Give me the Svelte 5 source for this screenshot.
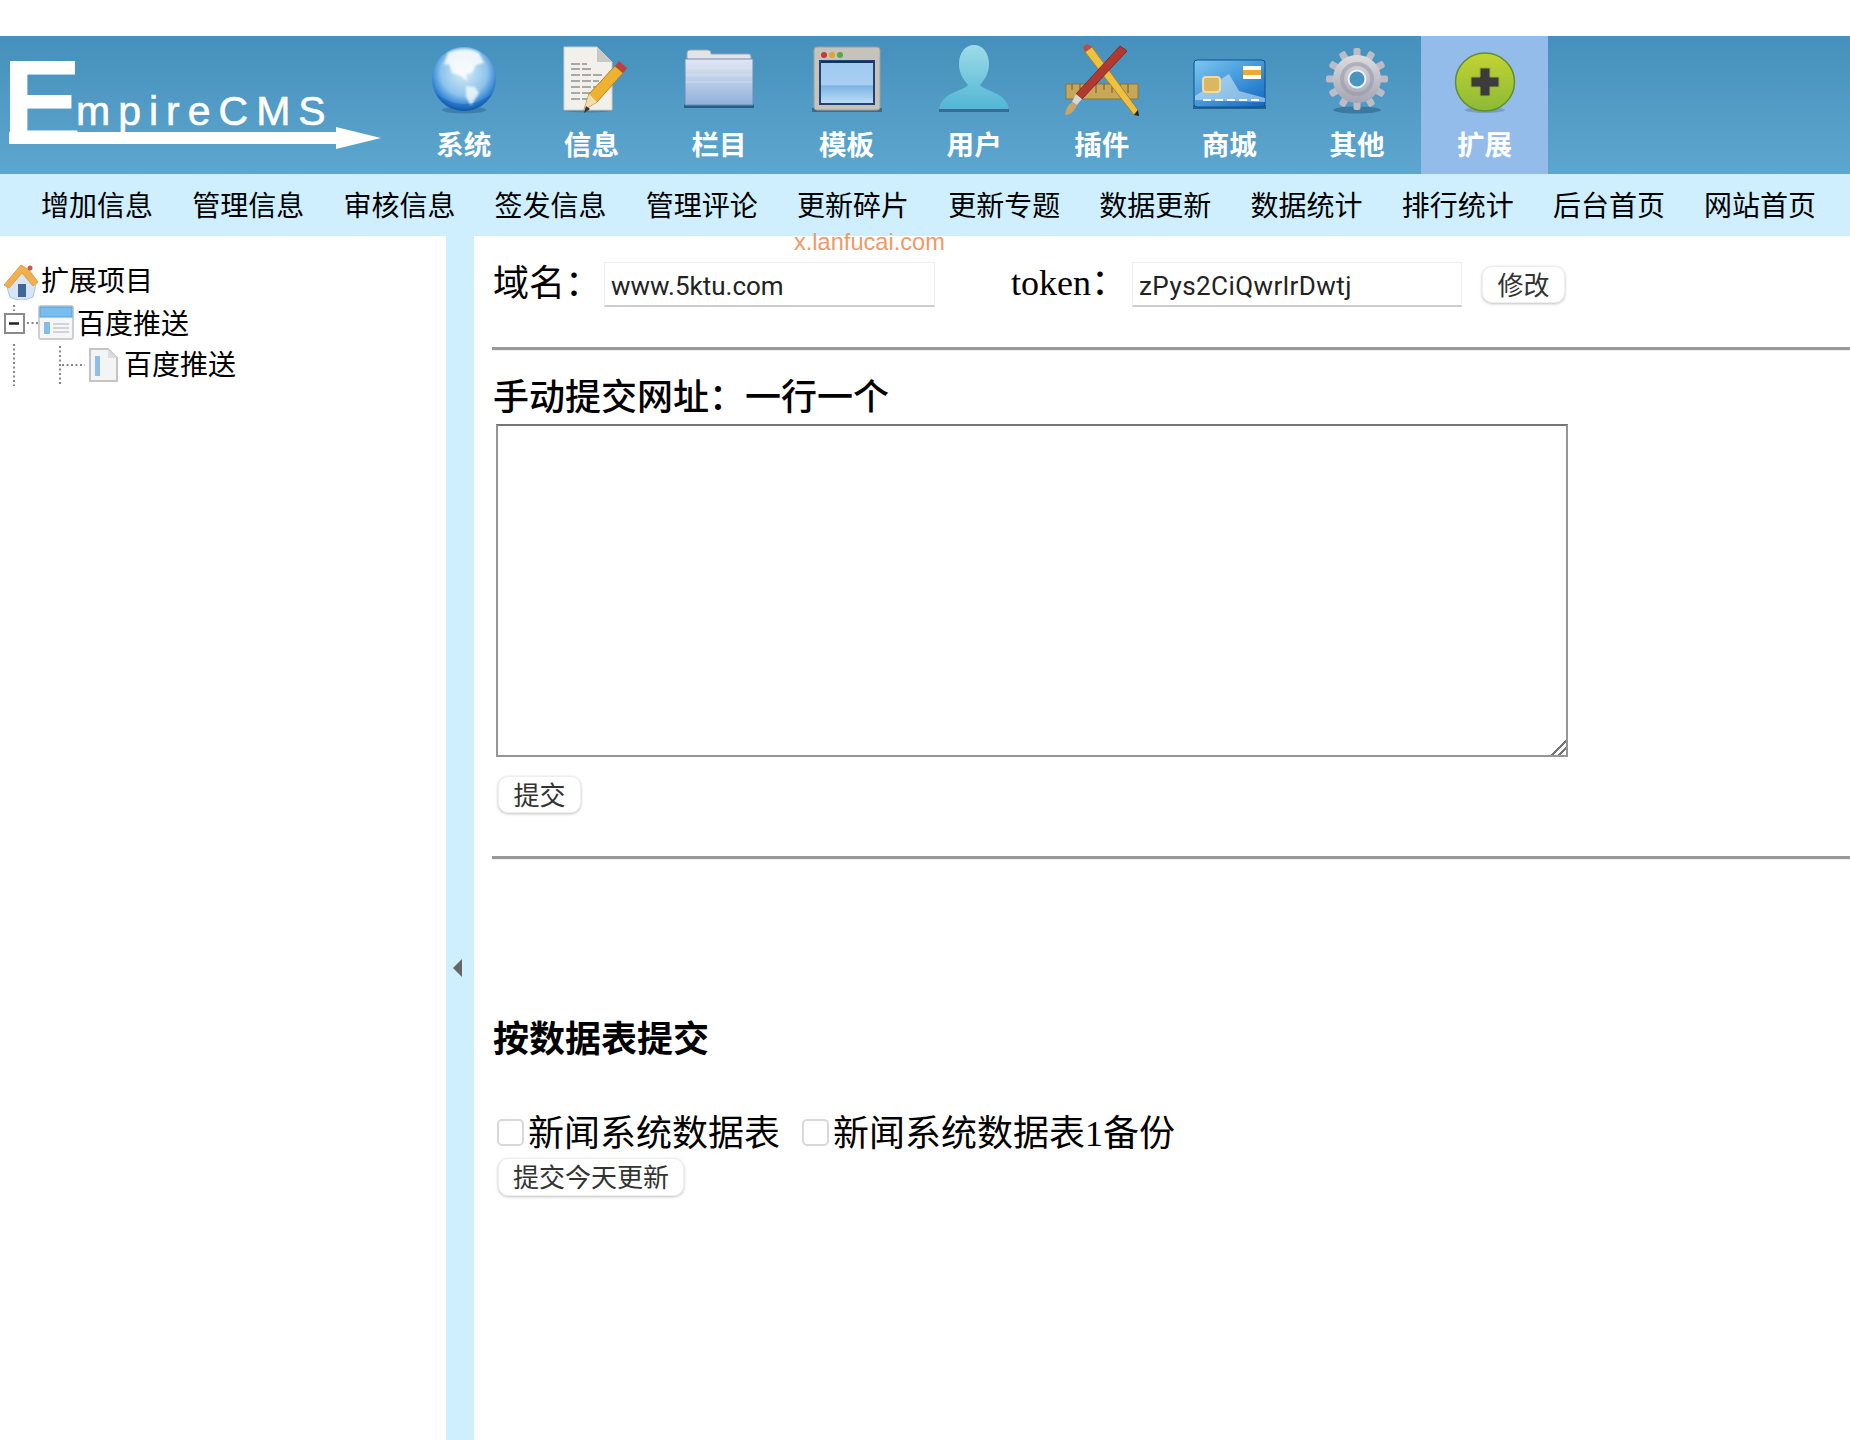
<script>
  const navItems = [
    { label: '系统', icon: 'globe' },
    { label: '信息', icon: 'doc' },
    { label: '栏目', icon: 'folder' },
    { label: '模板', icon: 'window' },
    { label: '用户', icon: 'user' },
    { label: '插件', icon: 'tools' },
    { label: '商城', icon: 'card' },
    { label: '其他', icon: 'gear' },
    { label: '扩展', icon: 'plus', active: true }
  ];
  const subItems = ['增加信息', '管理信息', '审核信息', '签发信息', '管理评论', '更新碎片', '更新专题', '数据更新', '数据统计', '排行统计', '后台首页', '网站首页'];
  const gearTeeth = [0, 30, 60, 90, 120, 150, 180, 210, 240, 270, 300, 330];
</script>

<div class="page">
  <header class="top">
    <div class="logo">
      <svg width="400" height="138" viewBox="0 0 400 138">
        <text class="logo-e" x="2" y="108">E</text>
        <text class="logo-word" x="76" y="89">mpireCMS</text>
        <path d="M9 96H336V91L381 102 336 113V108H9Z" fill="#fff" />
      </svg>
    </div>
    <nav class="nav">
      {#each navItems as item}
        <div class="nav-item" class:active={item.active}>
          <svg class="nav-icon" width="80" height="72" viewBox="0 0 80 72">
            {#if item.icon === 'globe'}
              <defs>
                <radialGradient id="globeFill" cx="0.5" cy="0.4" r="0.6">
                  <stop offset="0" stop-color="#d8ecf8" />
                  <stop offset="0.6" stop-color="#8cc4ec" />
                  <stop offset="0.88" stop-color="#2c7ed0" />
                  <stop offset="1" stop-color="#0f55ac" />
                </radialGradient>
                <filter id="landBlur"><feGaussianBlur stdDeviation="1.2" /></filter>
              </defs>
              <ellipse cx="40" cy="66" rx="22" ry="3.5" fill="#2f6c92" opacity="0.6" />
              <circle cx="40" cy="35" r="32" fill="url(#globeFill)" />
              <path d="M24 9c9-5 24-5 31 0l5 10-8 2-4 8-6 1 1 7-6-5-9-3-3-9-5 1z" fill="#fff" opacity="0.85" filter="url(#landBlur)" />
              <path d="M42 42l9 1 4 6-8 13-5-9z" fill="#fff" opacity="0.75" filter="url(#landBlur)" />
              <path d="M12 50q28 20 56 0-12 17-28 17t-28-17z" fill="#0f55ac" opacity="0.35" />
            {:else if item.icon === 'doc'}
              <ellipse cx="37" cy="66" rx="25" ry="2.5" fill="#2f6c92" opacity="0.5" />
              <path d="M13 3H46L61 18V66H13Z" fill="#f1f0ea" stroke="#d0cfc8" />
              <path d="M46 3V18H61Z" fill="#c9c9c4" />
              <path d="M20 20H36M20 25H40M20 31H52M20 37H48M20 43H50M20 49H42M20 55H38" stroke="#a8a8a4" stroke-width="2" stroke-dasharray="9 2" />
              <path d="M33 66L38 50 64 22 72 29 46 58Z" fill="#eeb233" stroke="#b97e1c" />
              <path d="M64 22L68 17 76 24 72 29Z" fill="#b8433c" />
              <path d="M33 66L38 50 46 58Z" fill="#f3ddb0" />
              <path d="M33 69L35 62 39 65Z" fill="#333" />
            {:else if item.icon === 'folder'}
              <defs>
                <linearGradient id="folderFill" x1="0" y1="0" x2="0" y2="1">
                  <stop offset="0" stop-color="#e2e7f2" />
                  <stop offset="1" stop-color="#8fb0da" />
                </linearGradient>
              </defs>
              <path d="M5 60H75V64H5Z" fill="#174a70" opacity="0.75" />
              <path d="M8 14V9Q8 6 11 6H29Q32 6 32 9V10H70Q72 10 72 13V20H8Z" fill="#e2e4e6" stroke="#9aa3ad" />
              <path d="M6 15H74V61H6Z" fill="url(#folderFill)" stroke="#6e8db8" />
              <path d="M7 24H73M7 31H73M7 38H73" stroke="#fff" stroke-opacity="0.15" stroke-width="2" />
            {:else if item.icon === 'window'}
              <defs>
                <linearGradient id="windowFill" x1="0" y1="0" x2="0" y2="1">
                  <stop offset="0" stop-color="#9fcaf2" />
                  <stop offset="0.55" stop-color="#a8cff1" />
                  <stop offset="0.58" stop-color="#7cb4e6" />
                  <stop offset="1" stop-color="#c2dff4" />
                </linearGradient>
              </defs>
              <path d="M5 64H75V68H5Z" fill="#2f5a78" opacity="0.7" />
              <rect x="7" y="3" width="66" height="63" rx="3" fill="#c6c3bc" stroke="#a09e98" />
              <rect x="13" y="17" width="54" height="43" fill="url(#windowFill)" stroke="#1f4472" stroke-width="2" />
              <path d="M14 18H66" stroke="#15345c" stroke-width="2" />
              <circle cx="17" cy="11" r="3" fill="#c8392e" />
              <circle cx="25" cy="11" r="3" fill="#e0a42d" />
              <circle cx="33" cy="11" r="3" fill="#5ba645" />
            {:else if item.icon === 'user'}
              <defs>
                <linearGradient id="userFill" x1="0" y1="0" x2="0" y2="1">
                  <stop offset="0" stop-color="#9ddbe8" />
                  <stop offset="1" stop-color="#52b6d4" />
                </linearGradient>
              </defs>
              <path d="M5 64H75V68H5Z" fill="#2a5f84" opacity="0.75" />
              <path d="M40 1C49 1 55 9 55 20 55 31 49 37 46 41 50 47 72 48 75 65H5C8 48 30 47 34 41 31 37 25 31 25 20 25 9 31 1 40 1Z" fill="url(#userFill)" />
            {:else if item.icon === 'tools'}
              <path d="M4 40H76V55H4Z" fill="#c9a75a" stroke="#8f7434" />
              <path d="M10 40V46M18 40V49M26 40V46M34 40V49M42 40V46M50 40V49M58 40V46M66 40V49" stroke="#6e5826" />
              <path d="M23 8L30 3 76 66 72 71Z" fill="#edc240" stroke="#a8812a" />
              <path d="M23 8L30 3 25 0 21 3Z" fill="#c9473e" />
              <path d="M72 71L76 66 77 72Z" fill="#222" />
              <path d="M58 2L65 7 20 55 14 50Z" fill="#b2392f" stroke="#842b24" />
              <path d="M20 55L14 50 10 58 14 62Z" fill="#d8d8d4" />
              <path d="M11 58L15 61C12 68 8 71 3 71 4 65 6 60 11 58Z" fill="#c9a468" />
            {:else if item.icon === 'card'}
              <defs>
                <linearGradient id="cardFill" x1="0" y1="0" x2="1" y2="1">
                  <stop offset="0" stop-color="#7cc8f0" />
                  <stop offset="1" stop-color="#0f68c4" />
                </linearGradient>
              </defs>
              <path d="M4 61H77V65H4Z" fill="#174a70" opacity="0.7" />
              <rect x="5" y="16" width="71" height="47" rx="3" fill="url(#cardFill)" stroke="#0f4f96" />
              <path d="M40 30L50 47 76 54V58L6 56 6 52Z" fill="#d7ecf8" opacity="0.55" />
              <rect x="14" y="33" width="17" height="15" rx="3" fill="#d9b864" stroke="#f2dc9c" stroke-width="2" />
              <rect x="54" y="22" width="18" height="13" fill="#fff" />
              <rect x="54" y="26" width="18" height="5" fill="#efa92c" />
              <path d="M14 56H70" stroke="#ffffff" stroke-width="2" stroke-dasharray="8 4" />
            {:else if item.icon === 'gear'}
              <defs>
                <linearGradient id="gearFill" x1="0" y1="0" x2="0" y2="1">
                  <stop offset="0" stop-color="#dcdce0" />
                  <stop offset="1" stop-color="#a5a5b4" />
                </linearGradient>
              </defs>
              <ellipse cx="40" cy="66" rx="24" ry="3.5" fill="#2f6c92" opacity="0.7" />
              {#each gearTeeth as a}
                <rect x="36.5" y="4" width="7" height="14" rx="2" fill="#bcbcc6" transform="rotate({a} 40 35)" />
              {/each}
              <circle cx="40" cy="35" r="24" fill="url(#gearFill)" />
              <circle cx="40" cy="35" r="15" fill="none" stroke="#9696a6" stroke-width="4" opacity="0.55" />
              <circle cx="40" cy="35" r="8.5" fill="#4a95c0" stroke="#f2f2f4" stroke-width="2" />
            {:else if item.icon === 'plus'}
              <defs>
                <linearGradient id="plusFill" x1="0" y1="0" x2="0" y2="1">
                  <stop offset="0" stop-color="#c3d334" />
                  <stop offset="1" stop-color="#8cba36" />
                </linearGradient>
              </defs>
              <ellipse cx="40" cy="66" rx="20" ry="3" fill="#6788ab" opacity="0.6" />
              <ellipse cx="40" cy="38" rx="29.5" ry="29" fill="url(#plusFill)" stroke="#5f8f28" stroke-width="1.5" />
              <path d="M35 24H45V33H54V43H45V52H35V43H26V33H35Z" fill="#3c3c3c" stroke="#9eae35" />
            {/if}
          </svg>
          <span class="nav-label">{item.label}</span>
        </div>
      {/each}
    </nav>
  </header>

  <div class="submenu">
    {#each subItems as text}
      <span>{text}</span>
    {/each}
  </div>

  <div class="watermark">x.lanfucai.com</div>

  <div class="body">
    <aside class="tree">
      <div class="tree-row root">
        <svg width="36" height="36" viewBox="0 0 36 36">
          <path d="M18 6L33 20 30 33Q24 36 18 36 11 36 7 33L3 20Z" fill="#d6e6f6" stroke="#a9c4e0" />
          <path d="M18 1L1 21 6 24 19 9 30 22 35 18 26 6Z" fill="#efb04f" stroke="#e0a040" />
          <circle cx="27" cy="4" r="2.5" fill="#c25a50" />
          <rect x="15" y="20" width="8" height="13" fill="#41669a" />
        </svg>
        <span>扩展项目</span>
      </div>
      <div class="tree-row branch">
        <svg width="74" height="36" viewBox="0 0 74 36">
          <path d="M11 0V6" class="dots" />
          <rect x="2" y="9" width="19" height="19" fill="#fff" stroke="#8a8a8a" stroke-width="2" />
          <path d="M6 18.5H16" stroke="#222" stroke-width="2.5" />
          <path d="M24 18H35" class="dots" />
          <rect x="36" y="1" width="34" height="33" rx="2" fill="#f5f6f7" stroke="#cfcfcf" stroke-width="2" />
          <rect x="37" y="2" width="32" height="10" fill="#78bdf0" stroke="#5aa0d8" />
          <rect x="41" y="17" width="6" height="12" fill="#85bde8" />
          <path d="M50 19H66M50 23H66M50 27H66" stroke="#c8c8c8" stroke-width="1.5" />
        </svg>
        <span>百度推送</span>
      </div>
      <div class="tree-row leaf">
        <svg width="120" height="42" viewBox="0 0 120 42">
          <path d="M11 0V42M57 2V40M59 21H82" class="dots" />
          <path d="M87 5H105L114 14V37H87Z" fill="#f4f4f4" stroke="#c4c4c4" stroke-width="2" />
          <path d="M105 5V14H114Z" fill="#dcdcdc" />
          <rect x="92" y="12" width="5" height="20" fill="#8cc0e8" />
        </svg>
        <span>百度推送</span>
      </div>
    </aside>

    <div class="splitter"><span class="arrow"></span></div>

    <main class="main">
      <div class="config">
        <span class="label domain-label">域名：</span>
        <input class="text-field" value="www.5ktu.com" />
        <span class="label token-label">token：</span>
        <input class="text-field token-field" value="zPys2CiQwrlrDwtj" />
        <button class="btn edit-btn">修改</button>
      </div>
      <div class="rule first-rule"></div>
      <div class="heading manual">手动提交网址：一行一个</div>
      <textarea class="urls"></textarea>
      <button class="btn submit-btn">提交</button>
      <div class="rule second-rule"></div>
      <div class="heading table-heading">按数据表提交</div>
      <div class="checks">
        <label><input type="checkbox" /><span>新闻系统数据表</span></label>
        <label><input type="checkbox" /><span>新闻系统数据表1备份</span></label>
      </div>
      <button class="btn today-btn">提交今天更新</button>
    </main>
  </div>
</div>

<style>
  :global(body) {
    margin: 0;
    background: #fff;
    overflow: hidden;
  }

  .page {
    position: relative;
    height: 1440px;
    padding-top: 36px;
    box-sizing: border-box;
    font-family: "Liberation Serif", "Noto Sans CJK SC", serif;
    color: #000;
  }

  .top {
    display: flex;
    height: 138px;
    background: linear-gradient(#4590bc, #5da6cf);
  }

  .logo {
    width: 400px;
    flex: none;
  }

  .logo svg {
    display: block;
    overflow: visible;
  }

  .logo-e {
    font-family: "Liberation Sans", sans-serif;
    font-weight: 700;
    font-size: 120px;
    fill: #fff;
  }

  .logo-word {
    font-family: "Liberation Sans", sans-serif;
    font-size: 41px;
    letter-spacing: 8px;
    fill: #fff;
    stroke: #fff;
    stroke-width: 0.6px;
  }

  .nav {
    display: flex;
  }

  .nav-item {
    width: 127.6px;
    display: flex;
    flex-direction: column;
    align-items: center;
    padding-top: 8px;
    box-sizing: border-box;
  }

  .nav-item.active {
    background: #94bceb;
  }

  .nav-icon {
    display: block;
  }

  .nav-label {
    margin-top: 9px;
    font-family: "Noto Sans CJK SC", sans-serif;
    font-weight: 700;
    font-size: 27.6px;
    line-height: 36px;
    color: #fff;
  }

  .submenu {
    display: flex;
    height: 62px;
    padding-left: 21px;
    padding-bottom: 3px;
    box-sizing: border-box;
    align-items: center;
    background: #cfefff;
    font-family: "Noto Sans CJK SC", sans-serif;
    font-size: 28px;
  }

  .submenu span {
    flex: none;
    width: 111.2px;
    padding: 0 20px;
    white-space: nowrap;
  }

  .watermark {
    position: absolute;
    left: 794px;
    top: 229px;
    font-family: "Liberation Sans", sans-serif;
    font-size: 23.6px;
    line-height: 27px;
    color: #ee9a68;
  }

  .body {
    display: grid;
    grid-template-columns: 446px 28px 1fr;
    height: 1204px;
  }

  .tree {
    padding: 25px 0 0 3px;
    font-size: 28px;
  }

  .tree-row {
    display: flex;
    align-items: center;
    height: 41.5px;
  }

  .tree-row span {
    line-height: 36px;
    white-space: nowrap;
  }

  .root span {
    margin-left: 2px;
  }

  .branch span {
    margin-left: 0;
    margin-top: 4px;
  }

  .leaf span {
    margin-left: 1px;
    margin-top: 2px;
  }

  .dots {
    fill: none;
    stroke: #888;
    stroke-width: 2;
    stroke-dasharray: 2 2.5;
  }

  .splitter {
    position: relative;
    background: #cfefff;
  }

  .arrow {
    position: absolute;
    left: 7px;
    top: 723px;
    border-style: solid;
    border-width: 9px 9px 9px 0;
    border-color: transparent #666 transparent transparent;
  }

  .main {
    padding-top: 26px;
    min-width: 0;
  }

  .config {
    display: flex;
    align-items: center;
    height: 45px;
    padding-left: 19px;
  }

  .label {
    font-size: 36px;
    line-height: 45px;
    white-space: nowrap;
  }

  .domain-label {
    width: 111px;
  }

  .token-label {
    width: 121px;
    margin-left: 76px;
    margin-bottom: 2px;
  }

  .text-field {
    width: 331px;
    height: 45px;
    box-sizing: border-box;
    padding: 3px 6px 0;
    border: 1px solid #eee;
    border-bottom: 2px solid #ccc;
    font-family: Roboto, sans-serif;
    font-size: 26px;
    color: #222;
    outline: none;
  }

  .token-field {
    width: 330px;
    letter-spacing: 0.45px;
  }

  .btn {
    display: block;
    height: 37px;
    padding: 0 0 3px;
    border: 1px solid #eee;
    border-radius: 10px;
    background: #fff;
    box-shadow: 0 1px 3px rgba(0, 0, 0, 0.25);
    font-family: "Noto Sans CJK SC", sans-serif;
    font-size: 26px;
    line-height: 33px;
    color: #333;
  }

  .edit-btn {
    width: 83px;
    margin-left: 20px;
  }

  .rule {
    height: 3px;
    margin-left: 18px;
    background: #999;
    border-bottom: 1px solid #eee;
  }

  .first-rule {
    margin-top: 40px;
  }

  .second-rule {
    margin-top: 43px;
  }

  .heading {
    margin-left: 19px;
    font-size: 36px;
    line-height: 47px;
    white-space: nowrap;
  }

  .manual {
    margin-top: 24px;
    font-weight: 500;
  }

  .urls {
    display: block;
    width: 1072px;
    height: 333px;
    box-sizing: border-box;
    margin: 2px 0 0 22px;
    border: 2px solid #969696;
    border-top-color: #767676;
    background: #fff;
    outline: none;
  }

  .urls::-webkit-resizer {
    background: linear-gradient(135deg, transparent 48%, #777 48% 58%, transparent 58% 72%, #777 72% 82%, transparent 82%);
  }

  .submit-btn {
    width: 83px;
    margin: 19px 0 0 24px;
  }

  .table-heading {
    margin-top: 157px;
    font-weight: 700;
  }

  .checks {
    display: flex;
    height: 47px;
    margin: 45px 0 0 23px;
    align-items: center;
    font-size: 36px;
  }

  .checks label {
    display: flex;
    align-items: center;
    margin-right: 22px;
    white-space: nowrap;
  }

  .checks span {
    margin-bottom: 5px;
  }

  .checks input {
    appearance: none;
    width: 27px;
    height: 27px;
    margin: 0 4px 0 0;
    box-sizing: border-box;
    border: 2px solid #d8d8d8;
    border-radius: 5px;
    background: #fff;
  }

  .today-btn {
    width: 186px;
    height: 38px;
    margin: 2px 0 0 24px;
  }
</style>
